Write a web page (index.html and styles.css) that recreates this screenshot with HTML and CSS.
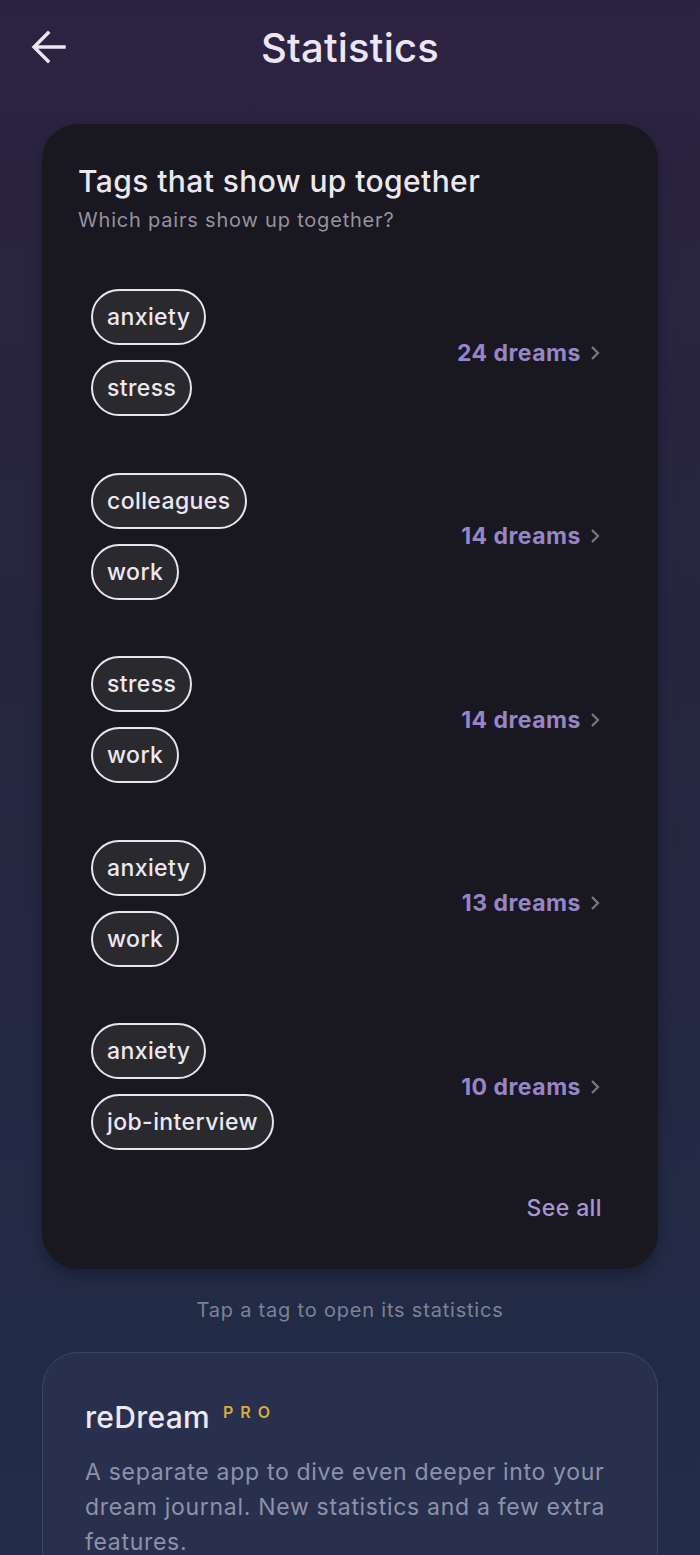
FILE: index.html
```html
<!DOCTYPE html>
<html lang="en">
<head>
<meta charset="utf-8">
<title>Statistics</title>
<link rel="stylesheet" href="styles.css">
</head>
<body>
<div class="screen">
  <header class="topbar">
    <button class="back" aria-label="Back">
      <svg viewBox="0 0 36 36" width="36" height="36"><path d="M34 18H5M18 4L4 18l14 14" fill="none" stroke="#ece6f4" stroke-width="3.4" stroke-linecap="square"/></svg>
    </button>
    <h1 class="title">Statistics</h1>
  </header>

  <section class="card">
    <h2 class="card-title">Tags that show up together</h2>
    <p class="card-sub">Which pairs show up together?</p>

    <ul class="pairs">
      <li class="pair">
        <div class="chips"><span class="chip">anxiety</span><span class="chip">stress</span></div>
        <a class="count">24 dreams <span class="chev"><svg viewBox="0 0 10 16" width="10" height="16"><path d="M2 2l6 6-6 6" fill="none" stroke="#7a7784" stroke-width="2.2"/></svg></span></a>
      </li>
      <li class="pair">
        <div class="chips"><span class="chip">colleagues</span><span class="chip">work</span></div>
        <a class="count">14 dreams <span class="chev"><svg viewBox="0 0 10 16" width="10" height="16"><path d="M2 2l6 6-6 6" fill="none" stroke="#7a7784" stroke-width="2.2"/></svg></span></a>
      </li>
      <li class="pair">
        <div class="chips"><span class="chip">stress</span><span class="chip">work</span></div>
        <a class="count">14 dreams <span class="chev"><svg viewBox="0 0 10 16" width="10" height="16"><path d="M2 2l6 6-6 6" fill="none" stroke="#7a7784" stroke-width="2.2"/></svg></span></a>
      </li>
      <li class="pair">
        <div class="chips"><span class="chip">anxiety</span><span class="chip">work</span></div>
        <a class="count">13 dreams <span class="chev"><svg viewBox="0 0 10 16" width="10" height="16"><path d="M2 2l6 6-6 6" fill="none" stroke="#7a7784" stroke-width="2.2"/></svg></span></a>
      </li>
      <li class="pair">
        <div class="chips"><span class="chip">anxiety</span><span class="chip">job-interview</span></div>
        <a class="count">10 dreams <span class="chev"><svg viewBox="0 0 10 16" width="10" height="16"><path d="M2 2l6 6-6 6" fill="none" stroke="#7a7784" stroke-width="2.2"/></svg></span></a>
      </li>
    </ul>

    <div class="card-foot"><a class="see-all">See all</a></div>
  </section>

  <p class="hint">Tap a tag to open its statistics</p>

  <section class="promo">
    <h3 class="promo-title">reDream <span class="pro">PRO</span></h3>
    <p class="promo-text">A separate app to dive even deeper into your dream journal. New statistics and a few extra features.</p>
  </section>
</div>
</body>
</html>
```
FILE: styles.css
```css
* { box-sizing: border-box; }

html, body {
  margin: 0;
  padding: 0;
}

body {
  width: 700px;
  height: 1555px;
  overflow: hidden;
  font-family: Inter, "Noto Sans", sans-serif;
  background: linear-gradient(180deg, #2c2341 0%, #262640 45%, #222b46 85%, #232c48 100%);
  color: #ece8f2;
}

.screen {
  padding: 0 42px;
}

.topbar {
  position: relative;
  height: 124px;
  display: flex;
  align-items: flex-start;
  justify-content: center;
}

.back {
  position: absolute;
  left: -14px;
  top: 29px;
  width: 40px;
  height: 36px;
  padding: 0;
  border: 0;
  background: none;
  display: flex;
  align-items: center;
  justify-content: center;
}

.title {
  margin: 23px 0 0;
  font-size: 40px;
  font-weight: 500;
  line-height: 50px;
  color: #ece6f4;
  letter-spacing: 0.2px;
}

.card {
  background: #19171f;
  border-radius: 36px;
  padding: 38px 56px 46px 36px;
  box-shadow: 0 6px 14px rgba(10, 10, 20, 0.35);
}

.card-title {
  margin: 0;
  font-size: 30px;
  font-weight: 500;
  line-height: 38px;
  color: #ece8f2;
  letter-spacing: 0.4px;
}

.card-sub {
  margin: 7px 0 0;
  font-size: 20px;
  line-height: 26px;
  color: #96929f;
  letter-spacing: 0.8px;
}

.pairs {
  list-style: none;
  margin: 56px 0 0;
  padding: 0 0 0 13px;
  display: flex;
  flex-direction: column;
  gap: 56.5px;
}

.pair {
  display: flex;
  align-items: center;
  justify-content: space-between;
}

.chips {
  display: flex;
  flex-direction: column;
  align-items: flex-start;
  gap: 15px;
}

.chip {
  height: 56px;
  padding: 0 14px;
  border: 2px solid #e9e5ee;
  border-radius: 28px;
  background: #2a292e;
  display: flex;
  align-items: center;
  font-size: 23px;
  font-weight: 500;
  color: #ece8f2;
  letter-spacing: 0.4px;
}

.count {
  display: flex;
  align-items: center;
  gap: 9px;
  margin-right: 2px;
  font-size: 23px;
  font-weight: 700;
  color: #9686c6;
  letter-spacing: 0.5px;
}

.chev {
  display: flex;
}

.card-foot {
  display: flex;
  justify-content: flex-end;
  margin-top: 43px;
}

.see-all {
  font-size: 23px;
  font-weight: 500;
  color: #a698d4;
  line-height: 30px;
  letter-spacing: 0.4px;
}

.hint {
  margin: 29px 0 0;
  text-align: center;
  font-size: 20px;
  line-height: 24px;
  color: #7c8196;
  letter-spacing: 0.8px;
}

.promo {
  margin-top: 30px;
  border: 1.5px solid #3d4565;
  border-radius: 36px;
  background: #29304d;
  padding: 46px 40px 40px 42px;
  min-height: 240px;
}

.promo-title {
  margin: 0;
  display: flex;
  align-items: flex-start;
  font-size: 30px;
  font-weight: 500;
  line-height: 36px;
  color: #ece8f6;
  letter-spacing: 0.3px;
}

.pro {
  margin-left: 13px;
  margin-top: 3px;
  font-size: 16px;
  font-weight: 600;
  letter-spacing: 7px;
  color: #d5ad3c;
  line-height: 20px;
}

.promo-text {
  margin: 20px 0 0;
  font-size: 23px;
  line-height: 35px;
  color: #8d92ab;
  letter-spacing: 0.7px;
}
```
